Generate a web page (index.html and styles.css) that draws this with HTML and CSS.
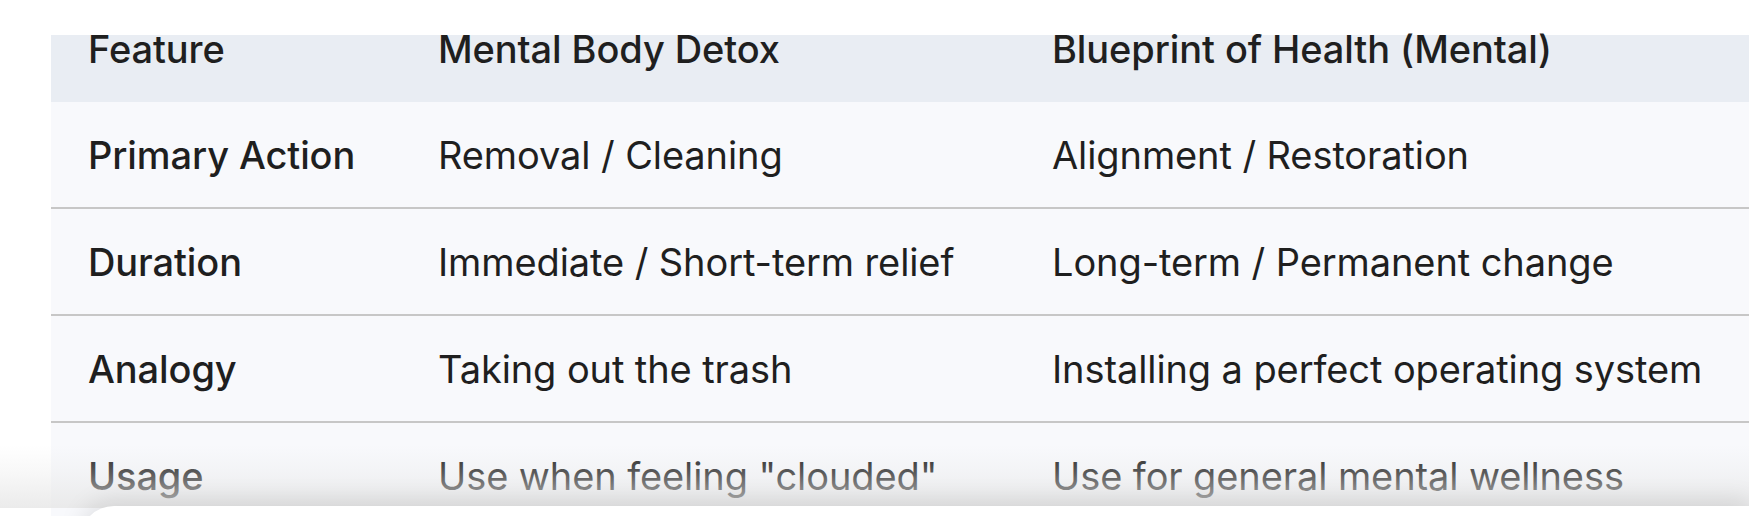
FILE: index.html
```html
<!DOCTYPE html>
<html lang="en">
<head>
<meta charset="utf-8">
<link rel="stylesheet" href="styles.css">
<title>Comparison</title>
</head>
<body>
<div class="page">
  <div class="table">
    <div class="row head">
      <div class="cell">Feature</div>
      <div class="cell">Mental Body Detox</div>
      <div class="cell">Blueprint of Health (Mental)</div>
    </div>
    <div class="row">
      <div class="cell key">Primary Action</div>
      <div class="cell">Removal / Cleaning</div>
      <div class="cell">Alignment / Restoration</div>
    </div>
    <div class="row">
      <div class="cell key">Duration</div>
      <div class="cell">Immediate / Short-term relief</div>
      <div class="cell">Long-term / Permanent change</div>
    </div>
    <div class="row">
      <div class="cell key">Analogy</div>
      <div class="cell">Taking out the trash</div>
      <div class="cell">Installing a perfect operating system</div>
    </div>
    <div class="row last">
      <div class="cell key">Usage</div>
      <div class="cell">Use when feeling "clouded"</div>
      <div class="cell">Use for general mental wellness</div>
    </div>
  </div>
  <div class="fade"></div>
  <div class="sheet"></div>
</div>
</body>
</html>
```
FILE: styles.css
```css
html, body {
  margin: 0;
  padding: 0;
  background: #ffffff;
  overflow: hidden;
}
.page {
  position: relative;
  width: 1749px;
  height: 516px;
  overflow: hidden;
  font-family: Inter, Roboto, sans-serif;
  color: #1f1f1f;
}
.table {
  margin: 35px 0 0 51px;
  background: #f8f9fc;
}
.row {
  display: grid;
  grid-template-columns: 350px 614px 1fr;
  align-items: center;
  height: 105px;
  border-bottom: 2px solid #c7c7c7;
  font-size: 38px;
  letter-spacing: -0.1px;
}
.row.last {
  border-bottom: none;
}
.row.head {
  height: 67px;
  align-items: start;
  background: #e9edf3;
  border-bottom: none;
  font-weight: 500;
}
.row.head .cell {
  line-height: 28px;
  padding-top: 0;
}
.cell {
  padding-left: 37px;
  white-space: nowrap;
}
.cell.key {
  font-weight: 500;
}
.fade {
  position: absolute;
  left: 0;
  right: 0;
  top: 445px;
  height: 63px;
  background: linear-gradient(to bottom, rgba(230,230,230,0) 0%, rgba(230,230,230,0.3) 45%, rgba(230,230,230,0.8) 100%);
}
.sheet {
  position: absolute;
  left: 80px;
  right: 0;
  top: 506px;
  height: 60px;
  background: #ffffff;
  border-radius: 34px 0 0 0;
  box-shadow: 0 -6px 24px rgba(0,0,0,0.10);
}
```
